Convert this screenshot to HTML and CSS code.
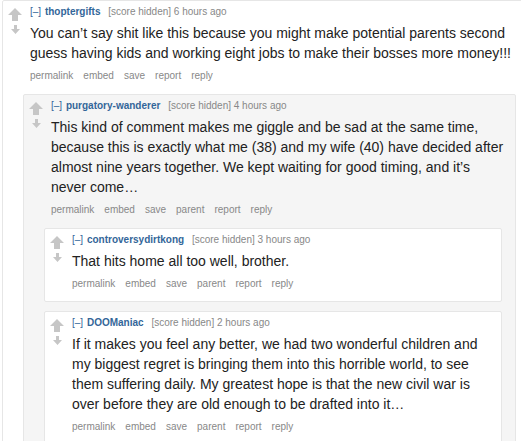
FILE: index.html
```html
<!DOCTYPE html>
<html lang="en">
<head>
  <meta charset="UTF-8">
  <title>comments</title>
  <link rel="stylesheet" href="styles.css">
</head>
<body>
  <div class="comment top">
    <div class="row">
      <div class="midcol">
        <svg class="up" width="14" height="13" viewBox="0 0 14 13"><polygon points="7,0 14,7 10,7 10,13 4,13 4,7 0,7"/></svg>
        <svg class="down" width="9" height="9" viewBox="0 0 9 9"><polygon points="3,0 6,0 6,4 9,4 4.5,9 0,4 3,4"/></svg>
      </div>
      <div class="entry">
        <p class="tagline"><a class="expand">[–]</a> <a class="author">thoptergifts</a> <span class="score">[score hidden] 6 hours ago</span></p>
        <div class="md">You can’t say shit like this because you might make potential parents second guess having kids and working eight jobs to make their bosses more money!!!</div>
        <ul class="buttons"><li>permalink</li><li>embed</li><li>save</li><li>report</li><li>reply</li></ul>
      </div>
    </div>

    <div class="child">
      <div class="comment odd">
        <div class="row">
          <div class="midcol">
            <svg class="up" width="14" height="13" viewBox="0 0 14 13"><polygon points="7,0 14,7 10,7 10,13 4,13 4,7 0,7"/></svg>
            <svg class="down" width="9" height="9" viewBox="0 0 9 9"><polygon points="3,0 6,0 6,4 9,4 4.5,9 0,4 3,4"/></svg>
          </div>
          <div class="entry">
            <p class="tagline"><a class="expand">[–]</a> <a class="author">purgatory-wanderer</a> <span class="score">[score hidden] 4 hours ago</span></p>
            <div class="md">This kind of comment makes me giggle and be sad at the same time, because this is exactly what me (38) and my wife (40) have decided after almost nine years together. We kept waiting for good timing, and it’s never come…</div>
            <ul class="buttons"><li>permalink</li><li>embed</li><li>save</li><li>parent</li><li>report</li><li>reply</li></ul>
          </div>
        </div>

        <div class="child">
          <div class="comment even">
            <div class="row">
              <div class="midcol">
                <svg class="up" width="14" height="13" viewBox="0 0 14 13"><polygon points="7,0 14,7 10,7 10,13 4,13 4,7 0,7"/></svg>
                <svg class="down" width="9" height="9" viewBox="0 0 9 9"><polygon points="3,0 6,0 6,4 9,4 4.5,9 0,4 3,4"/></svg>
              </div>
              <div class="entry">
                <p class="tagline"><a class="expand">[–]</a> <a class="author">controversydirtkong</a> <span class="score">[score hidden] 3 hours ago</span></p>
                <div class="md">That hits home all too well, brother.</div>
                <ul class="buttons"><li>permalink</li><li>embed</li><li>save</li><li>parent</li><li>report</li><li>reply</li></ul>
              </div>
            </div>
          </div>

          <div class="comment even">
            <div class="row">
              <div class="midcol">
                <svg class="up" width="14" height="13" viewBox="0 0 14 13"><polygon points="7,0 14,7 10,7 10,13 4,13 4,7 0,7"/></svg>
                <svg class="down" width="9" height="9" viewBox="0 0 9 9"><polygon points="3,0 6,0 6,4 9,4 4.5,9 0,4 3,4"/></svg>
              </div>
              <div class="entry">
                <p class="tagline"><a class="expand">[–]</a> <a class="author">DOOManiac</a> <span class="score">[score hidden] 2 hours ago</span></p>
                <div class="md">If it makes you feel any better, we had two wonderful children and my biggest regret is bringing them into this horrible world, to see them suffering daily. My greatest hope is that the new civil war is over before they are old enough to be drafted into it…</div>
                <ul class="buttons"><li>permalink</li><li>embed</li><li>save</li><li>parent</li><li>report</li><li>reply</li></ul>
              </div>
            </div>
          </div>
        </div>
      </div>
    </div>
  </div>
</body>
</html>
```

FILE: styles.css
```css
body {
  margin: 0;
  background: #fff;
  color: #222;
  font-family: "Liberation Sans", Arial, sans-serif;
  overflow: hidden;
}

.comment {
  border: 1px solid #e6e6e6;
  border-radius: 2px;
  padding: 4px 0 10px 0;
  background: #fff;
}

.comment.top {
  margin: 0 -9px 0 2px;
}

.comment.odd {
  background: #f5f5f5;
}

.comment.even {
  background: #fff;
}

.row {
  display: flex;
}

.midcol {
  width: 14px;
  margin: 3px 8px 0 5px;
  display: flex;
  flex-direction: column;
  align-items: center;
  flex-shrink: 0;
}

.midcol svg {
  fill: #c6c6c6;
  display: block;
}

.midcol .down {
  margin-top: 4px;
}

.entry {
  flex: 1;
  padding-right: 9px;
}

.tagline {
  margin: 0;
  font-size: 10px;
  line-height: 14px;
  color: #888;
}

.tagline a {
  color: #369;
}

.tagline .author {
  font-weight: bold;
  margin-left: 1px;
  margin-right: 5px;
}

.md {
  margin-top: 4px;
  font-size: 14px;
  line-height: 20px;
  color: #222;
}

.buttons {
  list-style: none;
  margin: 6px 0 0 0;
  padding: 0;
  display: flex;
  gap: 10px;
  font-size: 10px;
  line-height: 14px;
  color: #888;
}

.child {
  margin: 11px 13px 0 20px;
}

.child .comment + .comment {
  margin-top: 9px;
}
```
